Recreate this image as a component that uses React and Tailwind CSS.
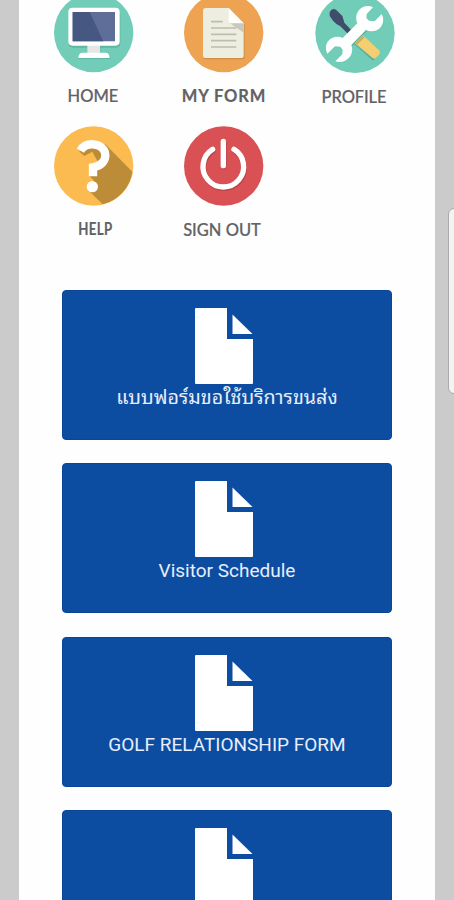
function HomeIcon() {
  return (
    <svg viewBox="42 -21 240 240" className="block size-20">
      <circle cx="161" cy="98" r="119" fill="#71cdb7" />
      <path d="M100 30H227Q241 30 241 44V129Q241 143 227 143H181V160H198Q212 160 212 177H115Q115 164 129 161H142V143H100Q86 143 86 129V44Q86 30 100 30Z" fill="#4e9f90" opacity=".5" />
      <path d="M142 134H180V166H142Z" fill="#e6e7e2" />
      <path d="M98 23H226Q239 23 239 36V124Q239 137 226 137H98Q85 137 85 124V36Q85 23 98 23Z" fill="#fff" />
      <path d="M129 158H196Q209 158 209 174H115Q115 158 129 158Z" fill="#fff" />
      <path d="M98 36H225V124H98Z" fill="#5f6e99" />
      <path d="M98 36H149L190 124H98Z" fill="#465782" />
    </svg>
  );
}

function FormIcon() {
  return (
    <svg viewBox="42 -21 240 240" className="block size-20">
      <circle cx="161" cy="98" r="119" fill="#eda351" />
      <path d="M108 28H178L224 72V170Q224 178 216 178H108Q99 178 99 170V36Q99 28 108 28Z" fill="#bc8245" opacity=".6" />
      <path d="M107 24H176L221 70V167Q221 174 213 174H107Q99 174 99 167V32Q99 24 107 24Z" fill="#eeeee0" />
      <path d="M176 24L221 70H184Q176 70 176 62Z" fill="#fffffa" />
      <path d="M180 70H221V98Z" fill="#c9c8bd" />
      <path d="M123 65H158M123 84H199M123 103H199M123 122H199M123 141H199" stroke="#bdbcae" strokeWidth="5" />
    </svg>
  );
}

function ProfileIcon() {
  return (
    <svg viewBox="45 -18 240 240" className="block size-20">
      <circle cx="165" cy="100" r="119" fill="#71cdb7" />
      <g transform="translate(3 4)" opacity=".35" fill="none" stroke="#28766b">
        <path d="M137 131L190 76" strokeWidth="29" />
        <path d="M163 114L224 169" strokeWidth="25" />
      </g>
      <path d="M89 36Q96 23 108 29L127 48Q131 60 133 68L160 97L148 106L121 79Q108 73 99 62L89 48Z" fill="#414c6b" />
      <path d="M164 129L188 105L237 151Q243 157 237 164L227 174Q221 178 215 172Z" fill="#f3cf72" />
      <path d="M187 107L194 112L171 135L164 129Z" fill="#c9b25f" />
      <path d="M219 22C205 14 185 19 175 33C166 47 168 60 172 70L128 114C113 106 93 112 83 125C76 135 76 148 82 161L105 139L121 140L128 149L127 163L106 184C122 190 139 183 149 171C158 159 158 145 154 135L198 90C214 98 233 93 243 80C252 68 251 53 245 42L224 64L207 62L199 54L200 42Z" fill="#fff" />
    </svg>
  );
}

function HelpIcon() {
  return (
    <svg viewBox="42 18 240 240" className="block size-20">
      <circle cx="161" cy="138" r="119" fill="#fbbb50" />
      <path d="M117 94L133 108L157 95L175 128L150 142V170L161 180L145 211L188 253A119 119 0 0 0 277 155L196 73Z" fill="#bd8c38" />
      <path d="M121 92C130 77 145 72 160 73C181 74 196 88 196 106C196 124 183 138 159 142V169" fill="none" stroke="#fff" strokeWidth="25" />
      <circle cx="157" cy="200" r="17" fill="#fff" />
    </svg>
  );
}

function PowerIcon() {
  return (
    <svg viewBox="42 18 240 240" className="block size-20">
      <circle cx="161" cy="138" r="119" fill="#d95154" />
      <g fill="none" strokeLinecap="round" strokeWidth="16">
        <path d="M130 92A61 61 0 1 0 194 92M162 69V141" stroke="#a93d45" opacity=".6" />
        <path d="M128 88A61 61 0 1 0 192 88M160 64V137" stroke="#fff" />
      </g>
    </svg>
  );
}

function FileIcon() {
  return (
    <svg viewBox="0 0 58 76" className="block h-[76px] w-[58px]" fill="#fff">
      <path d="M1 0H32V31H58V75Q58 76 57 76H1Q0 76 0 75V1Q0 0 1 0Z" />
      <path d="M37.5 6.5L57.5 26H37.5Z" />
    </svg>
  );
}

const menu = [
  { label: "HOME", Icon: HomeIcon, item: "", text: "mt-[13px] -translate-x-px text-[16.5px] tracking-[0px] font-medium" },
  { label: "MY FORM", Icon: FormIcon, item: "", text: "mt-[13px] text-[16.5px] tracking-[0.9px] font-bold" },
  { label: "PROFILE", Icon: ProfileIcon, item: "pt-px", text: "mt-[13px] -translate-x-px text-[16.5px] tracking-[-0.1px] font-medium" },
  { label: "HELP", Icon: HelpIcon, item: "", text: "mt-[13px] translate-x-px scale-x-[.8] text-[16.5px] tracking-[0.5px] font-bold" },
  { label: "SIGN OUT", Icon: PowerIcon, item: "", text: "mt-[14px] -translate-x-0.5 text-[16.5px] tracking-[0px] font-medium" },
];

const forms = [
  { title: "แบบฟอร์มขอใช้บริการขนส่ง", text: "text-[19.7px]" },
  { title: "Visitor Schedule", text: "text-[19px]" },
  { title: "GOLF RELATIONSHIP FORM", text: "text-[19px]" },
  { title: "", text: "text-[19px]" },
];

export default function App() {
  return (
    <div className="relative h-[900px] w-[454px] overflow-hidden bg-[#cbcbcb] pl-[19px]">
      <main className="h-full w-[416px] overflow-hidden bg-[#fefefe]">
        <nav className="-mt-[7px] ml-[10px] grid grid-cols-[130px_130px_132px] grid-rows-[133px_164px]">
          {menu.map(({ label, Icon, item, text }) => (
            <div key={label} className={`flex flex-col items-center ${item}`}>
              <Icon />
              <span className={`whitespace-nowrap font-['Lato',sans-serif] leading-5 text-[#626264] [-webkit-text-stroke:0.2px_#626264] ${text}`}>{label}</span>
            </div>
          ))}
        </nav>
        <section className="ml-[43px] flex w-[330px] flex-col gap-[23.4px]">
          {forms.map(({ title, text }, i) => (
            <div key={i} className="flex h-[150px] shrink-0 flex-col items-center rounded-[4px] border border-[#0a4599] bg-[#0c4da2] pt-[17px]">
              <div className="-translate-x-[3px]">
                <FileIcon />
              </div>
              <span className={`whitespace-nowrap font-['Roboto','Noto_Sans_Thai_Looped','Loma','Garuda','Waree','Noto_Sans_Thai',sans-serif] leading-[27px] text-[#e8eefb] ${text}`}>{title}</span>
            </div>
          ))}
        </section>
      </main>
      <div className="absolute left-[448px] top-[208px] h-[186px] w-4 rounded-[6px] border border-[#aaa] bg-[#f3f3f3]" />
    </div>
  );
}
